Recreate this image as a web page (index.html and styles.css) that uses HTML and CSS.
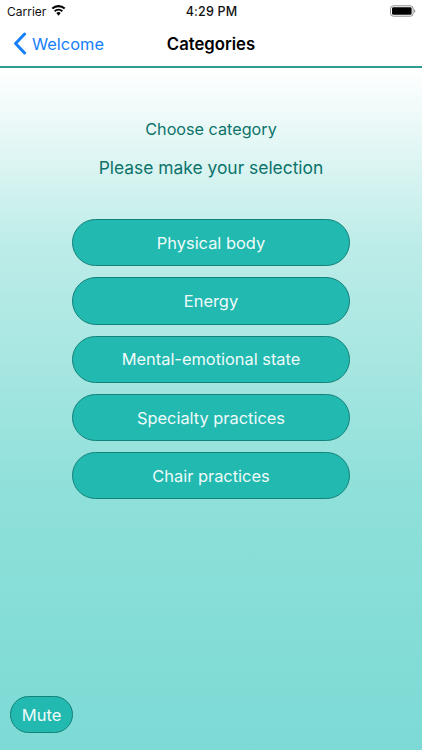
FILE: index.html
```html
<!DOCTYPE html>
<html lang="en">
<head>
<meta charset="utf-8">
<title>Categories</title>
<link rel="stylesheet" href="styles.css">
</head>
<body>
<div class="app">
  <header class="top">
    <div class="status">
      <div class="status-left">
        <span>Carrier</span>
        <svg class="wifi" width="15" height="11" viewBox="0 0 16 12"><path d="M8 11.6 5.6 8.8a3.6 3.6 0 0 1 4.8 0Z" fill="#000"/><path d="M4.5 7.5 3.1 5.9a7.4 7.4 0 0 1 9.8 0L11.5 7.5a5.3 5.3 0 0 0-7 0Z" fill="#000"/><path d="M2 4.7.5 3a11.2 11.2 0 0 1 15 0L14 4.7a9 9 0 0 0-12 0Z" fill="#000"/></svg>
      </div>
      <div class="status-time">4:29 PM</div>
      <div class="status-right">
        <svg width="26" height="12" viewBox="0 0 26 12"><rect x=".5" y=".8" width="22.6" height="10.4" rx="2.8" fill="none" stroke="#8c8c8c"/><rect x="2" y="2.2" width="19.6" height="7.6" rx="1.4" fill="#000"/><path d="M24 4.2c.9.2 1.3.9 1.3 1.8s-.4 1.6-1.3 1.8Z" fill="#9a9a9a"/></svg>
      </div>
    </div>
    <nav class="nav">
      <div class="back">
        <svg width="14" height="23" viewBox="0 0 14 23"><path d="M11.6 2 2.6 11.5l9 9.5" fill="none" stroke="#157efb" stroke-width="3" stroke-linecap="round" stroke-linejoin="round"/></svg>
        <span>Welcome</span>
      </div>
      <div class="title">Categories</div>
    </nav>
  </header>
  <main class="content">
    <p class="head">Choose category</p>
    <p class="sub">Please make your selection</p>
    <div class="list">
      <button class="pill">Physical body</button>
      <button class="pill">Energy</button>
      <button class="pill">Mental-emotional state</button>
      <button class="pill">Specialty practices</button>
      <button class="pill">Chair practices</button>
    </div>
    <button class="mute">Mute</button>
  </main>
</div>
</body>
</html>
```
FILE: styles.css
```css
* { box-sizing: border-box; }
html, body { margin: 0; padding: 0; }
body { width: 422px; height: 750px; overflow: hidden; font-family: Inter, "Liberation Sans", sans-serif; }
.app { width: 422px; height: 750px; display: flex; flex-direction: column; }
.top { background: #fff; height: 68px; flex: none; border-bottom: 2px solid #2f9c92; }
.status { height: 21px; display: grid; grid-template-columns: 1fr auto 1fr; align-items: center; padding: 1px 6px 0 7px; font-size: 12px; color: #111; }
.status-left { display: flex; align-items: center; gap: 5px; }
.wifi { margin-top: -1px; }
.status-time { font-weight: 500; font-size: 12.5px; letter-spacing: .2px; }
.status-right { display: flex; justify-content: flex-end; }
.nav { height: 45px; display: grid; grid-template-columns: 1fr; align-items: center; position: relative; }
.back { display: flex; align-items: center; gap: 5px; padding-left: 13px; color: #157efb; font-size: 16.4px; }
.title { position: absolute; left: 0; right: 0; text-align: center; font-size: 16.7px; font-weight: 600; color: #000; }
.content { flex: 1; display: flex; flex-direction: column; align-items: center; padding-top: 50px; position: relative; background: linear-gradient(#ffffff 0%, #bdece8 26%, #8fe0da 62%, #7cdad5 100%); }
.head { margin: 0; font-size: 16.2px; line-height: 22px; color: #0c736a; }
.sub { margin: 17px 0 0; font-size: 17.4px; line-height: 22px; color: #0c736a; }
.list { margin-top: 40px; display: flex; flex-direction: column; gap: 11px; }
.pill { width: 278px; height: 47.3px; border-radius: 24px; border: 1px solid #14827b; background: #22b9b0; color: #f0fbfa; font: inherit; font-size: 16.4px; padding: 0; }
.mute { position: absolute; left: 10px; bottom: 17px; width: 63px; height: 37px; border-radius: 19px; border: 1px solid #14827b; background: #22b9b0; color: #f0fbfa; font: inherit; font-size: 16.5px; padding: 0; }
```
